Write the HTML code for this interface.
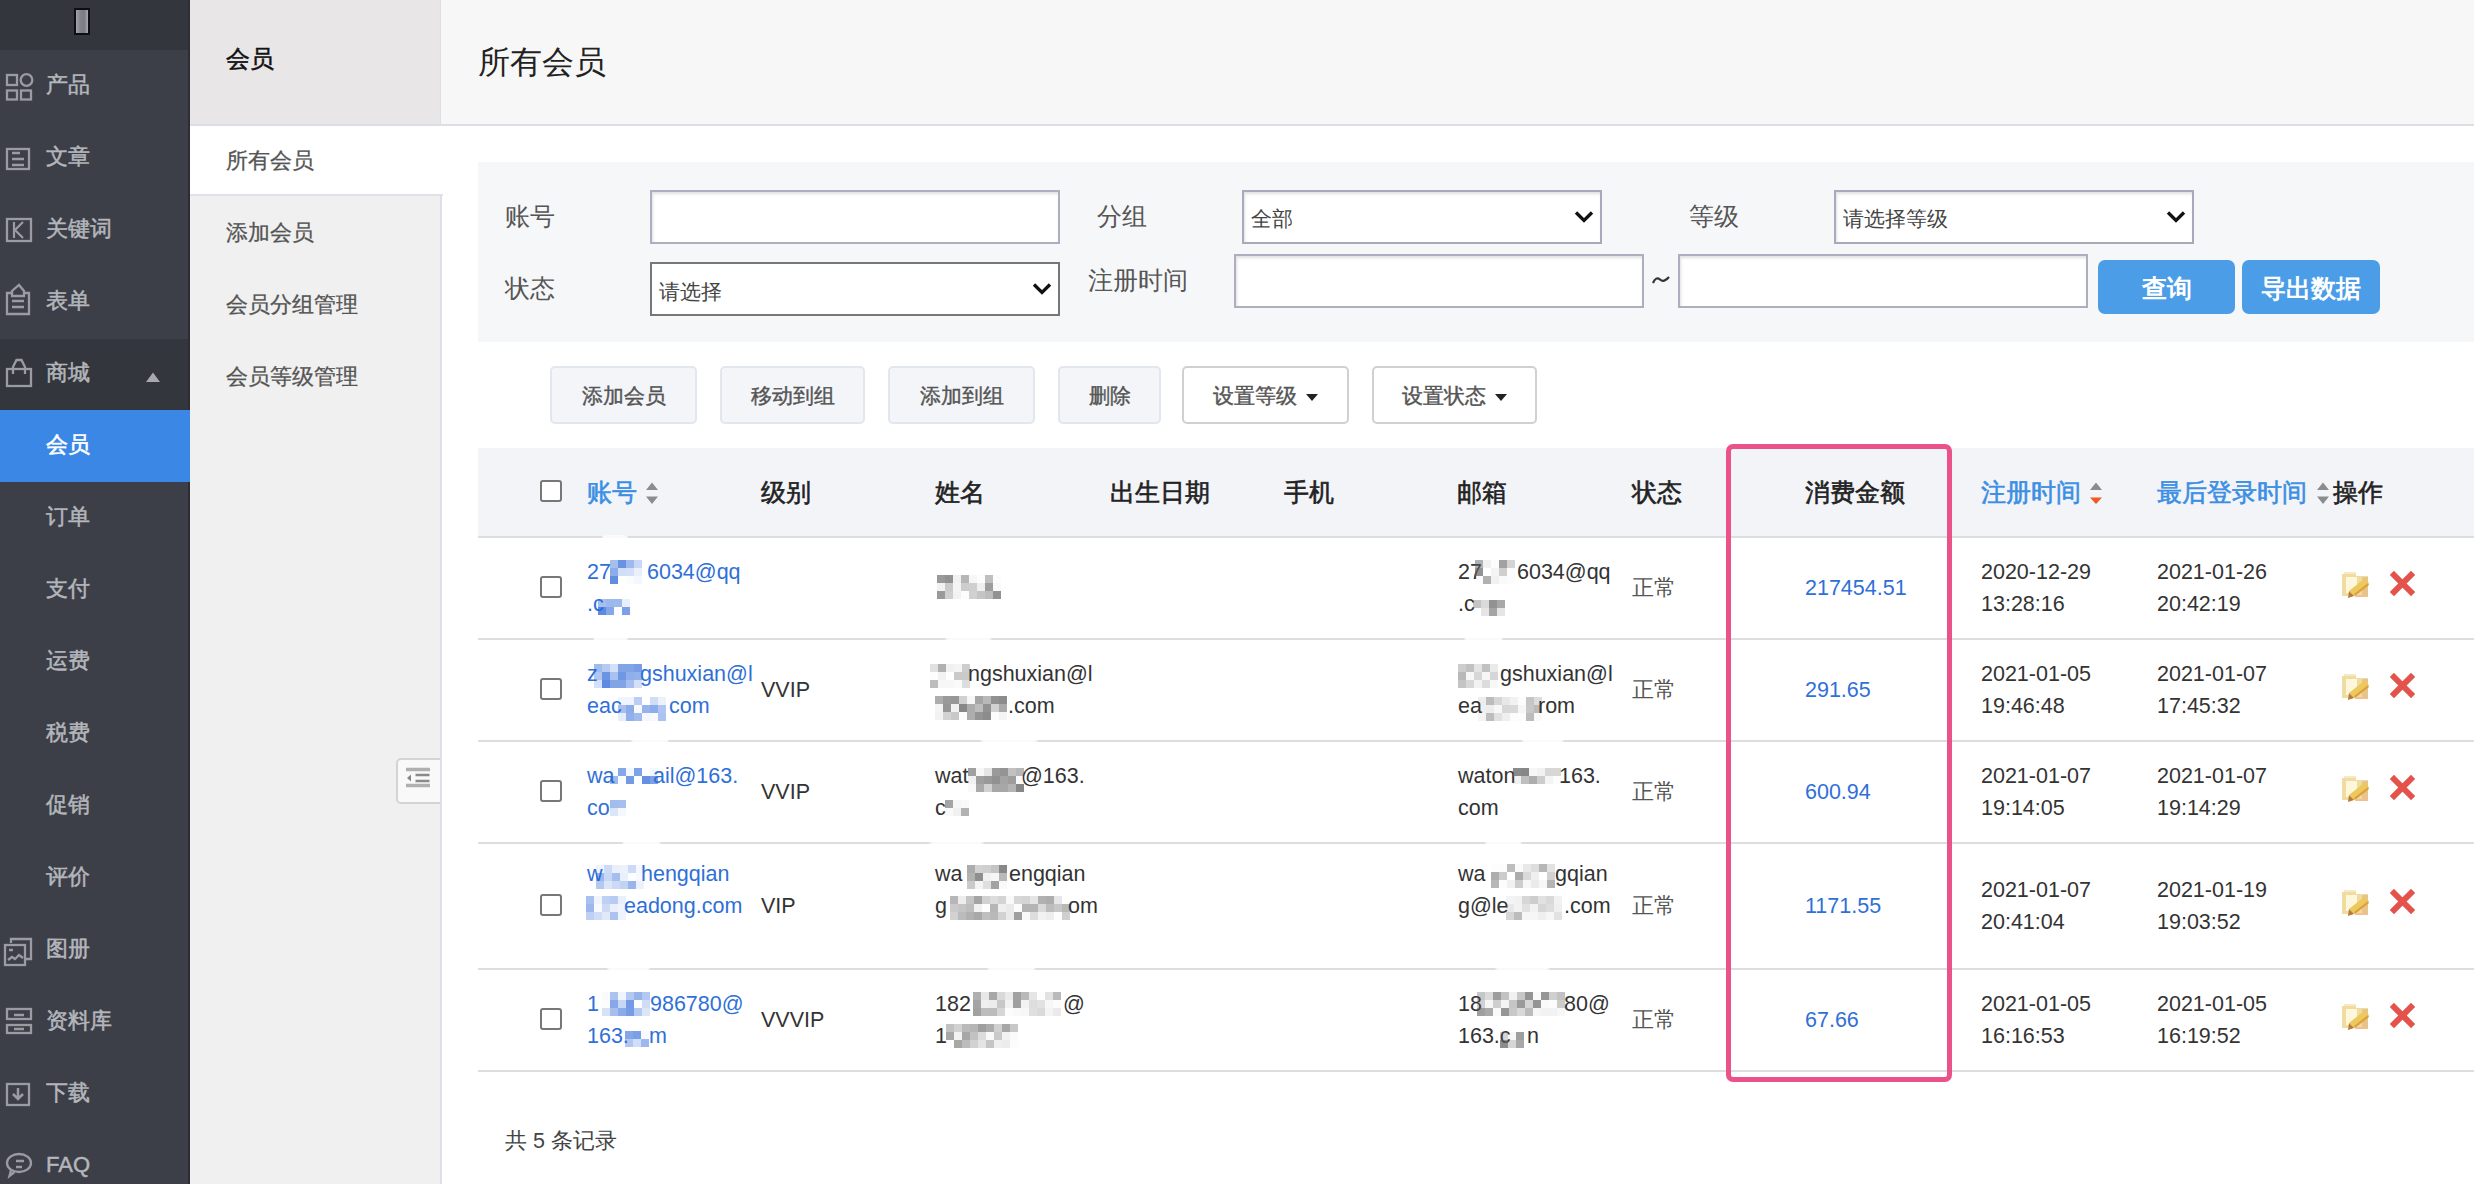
<!DOCTYPE html>
<html><head><meta charset="utf-8">
<style>
*{margin:0;padding:0;box-sizing:border-box}
html,body{width:2474px;height:1184px;overflow:hidden;background:#fff;font-family:"Liberation Sans",sans-serif;color:#333}
.a{position:absolute}
.t{position:absolute;white-space:nowrap;line-height:1}
#side{left:0;top:0;width:190px;height:1184px;background:#3c3f48}
#side .logo{left:0;top:0;width:190px;height:50px;background:#33363d}
#side .it{left:46px;font-size:21.5px;color:#b4b6bb;-webkit-text-stroke:0.5px #b4b6bb}
#side .ic{left:6px;width:28px;height:28px}
#sub{left:190px;top:0;width:252px;height:1184px;background:#f0f0f0;border-right:2px solid #dde0e6}
#sub .hd{left:0;top:0;width:250px;height:126px;background:#e8e6e7;border-bottom:2px solid #dcdee3}
#sub .it{left:36px;font-size:21.5px;color:#555;-webkit-text-stroke:0.3px #555}
#main-hd{left:441px;top:0;width:2033px;height:126px;background:#f7f7f7;border-bottom:2px solid #dcdee3}
.lbl{font-size:25px;color:#555}
.inp{position:absolute;background:#fff;border:2px solid #aeaec0;box-shadow:inset 1px 2px 3px rgba(0,0,0,.12);height:54px}
.sel{position:absolute;background:#fff;border:2px solid #a9a9bb;height:54px;font-size:21px;color:#444}
.sel span{position:absolute;left:7px;top:16px;line-height:1}
.sel svg{position:absolute;right:6px;top:18px}
.btnb{position:absolute;background:#4a9de6;border-radius:7px;color:#fff;font-size:25px;font-weight:bold;text-align:center;height:54px;line-height:57px}
.btn{position:absolute;top:366px;height:58px;background:#f3f5f9;border:2px solid #e1e6ef;border-radius:5px;font-size:21px;color:#555;-webkit-text-stroke:0.4px #555;text-align:center;line-height:56px}
.btn.w{background:#fff;border-color:#cfd0d4}
.th{position:absolute;top:480px;font-size:25px;color:#222;-webkit-text-stroke:0.6px currentColor;line-height:1;white-space:nowrap}
.th.b{color:#3b8fe3}
.cb{position:absolute;width:22px;height:22px;border:2px solid #777;border-radius:3px;background:#fff}
.cell{position:absolute;font-size:21.5px;line-height:32px;color:#333;white-space:nowrap}
.cell.b{color:#2f6fd8}
.st{position:absolute;font-size:21px;color:#555;line-height:1}
.hl{position:absolute;height:2px;background:#dcdedd;left:478px;width:1996px}
</style></head><body>

<!-- sidebar -->
<div id="side" class="a">
  <div class="a logo"></div>
  <div class="a" style="left:74px;top:8px;width:16px;height:27px;background:#0c0d16;border-radius:1px"></div>
  <div class="a" style="left:76px;top:10px;width:12px;height:23px;background:linear-gradient(90deg,#a3a4a8,#808188 40%,#7a7c82 70%,#a9aaae)"></div>
  <svg class="a" style="left:0;top:0" width="190" height="1184" fill="none" stroke="#9b9ca2" stroke-width="2.3">
    <rect x="7" y="75" width="10" height="10"/><rect x="7" y="90.5" width="10" height="9"/><rect x="21" y="90.5" width="10" height="9"/><circle cx="26.5" cy="80" r="5.8"/>
    <rect x="7" y="149" width="22" height="20"/><path d="M12 153h8M12 159h12M12 165h12"/>
    <rect x="7" y="219" width="24" height="22"/><path d="M14 222v16M23 222l-8 8 8 8" stroke-width="2.2"/>
    <path d="M12 293H7v21h22V293h-5"/><path d="M12 296v-5l7-6 5 6v5z"/><path d="M12 301h12M12 307h12"/>
    <rect x="7" y="369" width="24" height="17"/><path d="M13 374v-7l3.5-7h5l3.5 7v7"/>
    <path d="M11 943v-4h20v20h-6"/><rect x="5" y="945" width="20" height="20"/><path d="M8 960l4-3 3 2 4-4 4 3M9 950h4"/>
    <rect x="7" y="1009" width="24" height="10"/><rect x="7" y="1025" width="24" height="8"/><path d="M14 1015h10M14 1029h10"/>
    <rect x="7" y="1084" width="22" height="21"/><path d="M18 1088v11M13 1094l5 5 5-5" stroke-width="2.5"/>
    <ellipse cx="19" cy="1163" rx="12" ry="9"/><path d="M11 1170l-1.5 6 5-4M16 1161h8M16 1167h6"/>
  </svg>
  <div class="t it" style="top:75px">产品</div>
  <div class="t it" style="top:147px">文章</div>
  <div class="t it" style="top:219px">关键词</div>
  <div class="t it" style="top:291px">表单</div>
  <div class="a" style="left:0;top:339px;width:190px;height:71px;background:#33363d"></div>
  <svg class="a" style="left:0;top:0" width="190" height="420" fill="none" stroke="#9b9ca2" stroke-width="2.3">
    <rect x="7" y="369" width="24" height="17"/><path d="M13 374v-7l3.5-7h5l3.5 7v7"/>
  </svg>
  <div class="t it" style="top:363px">商城</div>
  <svg class="a" style="left:145px;top:371px" width="16" height="12" viewBox="0 0 16 12"><path d="M1 11 L8 1.5 L15 11 Z" fill="#a8a9ad"/></svg>
  <div class="a" style="left:188px;top:0;width:2px;height:1184px;background:#2c2e34"></div>
  <div class="a" style="left:0;top:410px;width:190px;height:72px;background:#3a87e6"></div>
  <div class="t it" style="top:435px;color:#fff;-webkit-text-stroke:0.6px #fff">会员</div>
  <div class="t it" style="top:507px">订单</div>
  <div class="t it" style="top:579px">支付</div>
  <div class="t it" style="top:651px">运费</div>
  <div class="t it" style="top:723px">税费</div>
  <div class="t it" style="top:795px">促销</div>
  <div class="t it" style="top:867px">评价</div>
  <div class="t it" style="top:939px">图册</div>
  <div class="t it" style="top:1011px">资料库</div>
  <div class="t it" style="top:1083px">下载</div>
  <div class="t it" style="top:1154px;font-family:'Liberation Sans',sans-serif;font-size:22px;font-weight:normal">FAQ</div>
</div>

<!-- sub nav -->
<div id="sub" class="a">
  <div class="a hd"></div>
  <div class="t" style="left:36px;top:47px;font-size:24px;-webkit-text-stroke:0.5px #111;color:#111">会员</div>
  <div class="a" style="left:0;top:126px;width:253px;height:70px;background:#fff;border-bottom:2px solid #dfe1e7"></div>
  <div class="t it" style="top:151px">所有会员</div>
  <div class="t it" style="top:223px">添加会员</div>
  <div class="t it" style="top:295px">会员分组管理</div>
  <div class="t it" style="top:367px">会员等级管理</div>
  <div class="a" style="left:206px;top:758px;width:48px;height:46px;background:#f9f9f9;border:2px solid #d4d4d6;border-radius:5px;clip-path:inset(0 4px 0 0)"></div>
  <svg class="a" style="left:206px;top:758px" width="46" height="46" fill="none"><path d="M10 11.5h24M10 27.5h24" stroke="#b0b0b0" stroke-width="3.5"/><path d="M19.5 17h14M19.5 23h14" stroke="#8a8a8a" stroke-width="2.5"/><path d="M15 16.5l-4 3.5 4 3.5z" fill="#888"/></svg>
</div>

<!-- main header -->
<div id="main-hd" class="a"></div>
<div class="t" style="left:478px;top:46px;font-size:32px;color:#222">所有会员</div>

<!-- filter panel -->
<div class="a" style="left:478px;top:162px;width:1996px;height:180px;background:#f6f7f9"></div>
<div class="t lbl" style="left:505px;top:204px">账号</div>
<div class="inp" style="left:650px;top:190px;width:410px"></div>
<div class="t lbl" style="left:1097px;top:204px">分组</div>
<div class="sel" style="left:1242px;top:190px;width:360px;box-shadow:inset 1px 2px 3px rgba(0,0,0,.12)"><span>全部</span><svg width="20" height="14" viewBox="0 0 20 14"><path d="M2 2.5 L10 10.5 L18 2.5" fill="none" stroke="#111" stroke-width="3.3"/></svg></div>
<div class="t lbl" style="left:1689px;top:204px">等级</div>
<div class="sel" style="left:1834px;top:190px;width:360px;box-shadow:inset 1px 2px 3px rgba(0,0,0,.12)"><span>请选择等级</span><svg width="20" height="14" viewBox="0 0 20 14"><path d="M2 2.5 L10 10.5 L18 2.5" fill="none" stroke="#111" stroke-width="3.3"/></svg></div>

<div class="t lbl" style="left:505px;top:276px">状态</div>
<div class="sel" style="left:650px;top:262px;width:410px;border-color:#777"><span style="top:17px">请选择</span><svg width="20" height="14" viewBox="0 0 20 14"><path d="M2 2.5 L10 10.5 L18 2.5" fill="none" stroke="#111" stroke-width="3.3"/></svg></div>
<div class="t lbl" style="left:1088px;top:268px">注册时间</div>
<div class="inp" style="left:1234px;top:254px;width:410px"></div>
<svg class="a" style="left:1650px;top:272px" width="22" height="16"><path d="M3 11 Q6 4 10 7.5 T19 5" fill="none" stroke="#333" stroke-width="2.2"/></svg>
<div class="inp" style="left:1678px;top:254px;width:410px"></div>
<div class="btnb" style="left:2098px;top:260px;width:137px">查询</div>
<div class="btnb" style="left:2242px;top:260px;width:138px">导出数据</div>

<!-- action buttons -->
<div class="btn" style="left:550px;width:147px">添加会员</div>
<div class="btn" style="left:720px;width:145px">移动到组</div>
<div class="btn" style="left:888px;width:147px">添加到组</div>
<div class="btn" style="left:1058px;width:103px">删除</div>
<div class="btn w" style="left:1182px;width:167px">设置等级 <span style="display:inline-block;width:0;height:0;border-left:6px solid transparent;border-right:6px solid transparent;border-top:7px solid #222;vertical-align:middle;margin-left:4px"></span></div>
<div class="btn w" style="left:1372px;width:165px">设置状态 <span style="display:inline-block;width:0;height:0;border-left:6px solid transparent;border-right:6px solid transparent;border-top:7px solid #222;vertical-align:middle;margin-left:4px"></span></div>

<!-- table header -->
<div class="a" style="left:478px;top:448px;width:1996px;height:89px;background:#f3f4f8"></div>
<div class="hl" style="top:536px"></div>
<div class="cb" style="left:540px;top:480px"></div>
<div class="th b" style="left:587px">账号</div>
<svg class="a" style="left:646px;top:482px" width="12" height="22" viewBox="0 0 12 22"><path d="M0 8 L6 0.5 L12 8Z M0 14.5 L6 22 L12 14.5Z" fill="#8c8c8c"/></svg>
<div class="th" style="left:761px">级别</div>
<div class="th" style="left:935px">姓名</div>
<div class="th" style="left:1110px">出生日期</div>
<div class="th" style="left:1284px">手机</div>
<div class="th" style="left:1457px">邮箱</div>
<div class="th" style="left:1632px">状态</div>
<div class="th" style="left:1805px">消费金额</div>
<div class="th b" style="left:1981px">注册时间</div>
<svg class="a" style="left:2090px;top:482px" width="12" height="22" viewBox="0 0 12 22"><path d="M0 8 L6 0.5 L12 8Z" fill="#8c8c8c"/><path d="M0 15.5 L6 22 L12 15.5Z" fill="#ee5a1e"/></svg>
<div class="th b" style="left:2157px">最后登录时间</div>
<svg class="a" style="left:2317px;top:482px" width="12" height="22" viewBox="0 0 12 22"><path d="M0 8 L6 0.5 L12 8Z M0 14.5 L6 22 L12 14.5Z" fill="#8c8c8c"/></svg>
<div class="th" style="left:2333px">操作</div>

<!-- row lines -->
<div class="hl" style="top:638px"></div>
<div class="hl" style="top:740px"></div>
<div class="hl" style="top:842px"></div>
<div class="hl" style="top:968px"></div>
<div class="hl" style="top:1070px"></div>
<div class="cb" style="left:540px;top:576px"></div>
<div class="cell" style="left:1632px;top:572px;color:#555;font-size:22px">正常</div>
<svg class="a" style="left:2342px;top:572px" width="30" height="27" viewBox="0 0 30 27"><path d="M0 2h14v2h12v20H0z" fill="#f0dba0"/><path d="M2 0h12v2H2z" fill="#f6e9c4"/><path d="M4 5h11v16H4z" fill="#fdf7dc"/><path d="M20 5h6v19h-6z" fill="#e6c48a"/><path d="M7 19L22 7l5 4-15 13z" fill="#ecc95a"/><path d="M12 22l14-11 1 2-14 11z" fill="#dca040"/><path d="M7 19l5 5-6 2z" fill="#b87a3c"/><path d="M13 23h13v2H13z" fill="#f2c090"/></svg>
<svg class="a" style="left:2390px;top:571px" width="25" height="25" viewBox="0 0 25 25"><path d="M4 4L21 21M21 4L4 21" stroke="#e4534b" stroke-width="6" stroke-linecap="square"/></svg>
<div class="cb" style="left:540px;top:678px"></div>
<div class="cell" style="left:1632px;top:674px;color:#555;font-size:22px">正常</div>
<svg class="a" style="left:2342px;top:674px" width="30" height="27" viewBox="0 0 30 27"><path d="M0 2h14v2h12v20H0z" fill="#f0dba0"/><path d="M2 0h12v2H2z" fill="#f6e9c4"/><path d="M4 5h11v16H4z" fill="#fdf7dc"/><path d="M20 5h6v19h-6z" fill="#e6c48a"/><path d="M7 19L22 7l5 4-15 13z" fill="#ecc95a"/><path d="M12 22l14-11 1 2-14 11z" fill="#dca040"/><path d="M7 19l5 5-6 2z" fill="#b87a3c"/><path d="M13 23h13v2H13z" fill="#f2c090"/></svg>
<svg class="a" style="left:2390px;top:673px" width="25" height="25" viewBox="0 0 25 25"><path d="M4 4L21 21M21 4L4 21" stroke="#e4534b" stroke-width="6" stroke-linecap="square"/></svg>
<div class="cb" style="left:540px;top:780px"></div>
<div class="cell" style="left:1632px;top:776px;color:#555;font-size:22px">正常</div>
<svg class="a" style="left:2342px;top:776px" width="30" height="27" viewBox="0 0 30 27"><path d="M0 2h14v2h12v20H0z" fill="#f0dba0"/><path d="M2 0h12v2H2z" fill="#f6e9c4"/><path d="M4 5h11v16H4z" fill="#fdf7dc"/><path d="M20 5h6v19h-6z" fill="#e6c48a"/><path d="M7 19L22 7l5 4-15 13z" fill="#ecc95a"/><path d="M12 22l14-11 1 2-14 11z" fill="#dca040"/><path d="M7 19l5 5-6 2z" fill="#b87a3c"/><path d="M13 23h13v2H13z" fill="#f2c090"/></svg>
<svg class="a" style="left:2390px;top:775px" width="25" height="25" viewBox="0 0 25 25"><path d="M4 4L21 21M21 4L4 21" stroke="#e4534b" stroke-width="6" stroke-linecap="square"/></svg>
<div class="cb" style="left:540px;top:894px"></div>
<div class="cell" style="left:1632px;top:890px;color:#555;font-size:22px">正常</div>
<svg class="a" style="left:2342px;top:890px" width="30" height="27" viewBox="0 0 30 27"><path d="M0 2h14v2h12v20H0z" fill="#f0dba0"/><path d="M2 0h12v2H2z" fill="#f6e9c4"/><path d="M4 5h11v16H4z" fill="#fdf7dc"/><path d="M20 5h6v19h-6z" fill="#e6c48a"/><path d="M7 19L22 7l5 4-15 13z" fill="#ecc95a"/><path d="M12 22l14-11 1 2-14 11z" fill="#dca040"/><path d="M7 19l5 5-6 2z" fill="#b87a3c"/><path d="M13 23h13v2H13z" fill="#f2c090"/></svg>
<svg class="a" style="left:2390px;top:889px" width="25" height="25" viewBox="0 0 25 25"><path d="M4 4L21 21M21 4L4 21" stroke="#e4534b" stroke-width="6" stroke-linecap="square"/></svg>
<div class="cb" style="left:540px;top:1008px"></div>
<div class="cell" style="left:1632px;top:1004px;color:#555;font-size:22px">正常</div>
<svg class="a" style="left:2342px;top:1004px" width="30" height="27" viewBox="0 0 30 27"><path d="M0 2h14v2h12v20H0z" fill="#f0dba0"/><path d="M2 0h12v2H2z" fill="#f6e9c4"/><path d="M4 5h11v16H4z" fill="#fdf7dc"/><path d="M20 5h6v19h-6z" fill="#e6c48a"/><path d="M7 19L22 7l5 4-15 13z" fill="#ecc95a"/><path d="M12 22l14-11 1 2-14 11z" fill="#dca040"/><path d="M7 19l5 5-6 2z" fill="#b87a3c"/><path d="M13 23h13v2H13z" fill="#f2c090"/></svg>
<svg class="a" style="left:2390px;top:1003px" width="25" height="25" viewBox="0 0 25 25"><path d="M4 4L21 21M21 4L4 21" stroke="#e4534b" stroke-width="6" stroke-linecap="square"/></svg>
<div class="cell b" style="left:1805px;top:572px;">217454.51</div>
<div class="cell" style="left:1981px;top:556px;">2020-12-29<br>13:28:16</div>
<div class="cell" style="left:2157px;top:556px;">2021-01-26<br>20:42:19</div>
<div class="cell b" style="left:1805px;top:674px;">291.65</div>
<div class="cell" style="left:1981px;top:658px;">2021-01-05<br>19:46:48</div>
<div class="cell" style="left:2157px;top:658px;">2021-01-07<br>17:45:32</div>
<div class="cell b" style="left:1805px;top:776px;">600.94</div>
<div class="cell" style="left:1981px;top:760px;">2021-01-07<br>19:14:05</div>
<div class="cell" style="left:2157px;top:760px;">2021-01-07<br>19:14:29</div>
<div class="cell b" style="left:1805px;top:890px;">1171.55</div>
<div class="cell" style="left:1981px;top:874px;">2021-01-07<br>20:41:04</div>
<div class="cell" style="left:2157px;top:874px;">2021-01-19<br>19:03:52</div>
<div class="cell b" style="left:1805px;top:1004px;">67.66</div>
<div class="cell" style="left:1981px;top:988px;">2021-01-05<br>16:16:53</div>
<div class="cell" style="left:2157px;top:988px;">2021-01-05<br>16:19:52</div>
<div class="cell" style="left:761px;top:674px;">VVIP</div>
<div class="cell" style="left:761px;top:776px;">VVIP</div>
<div class="cell" style="left:761px;top:890px;">VIP</div>
<div class="cell" style="left:761px;top:1004px;">VVVIP</div>
<div class="cell b" style="left:587px;top:556px;">27</div>
<svg class="a" style="left:610px;top:560px" width="32" height="24"><rect x="0" y="0" width="8" height="8" fill="rgba(40,100,215,0.42)"/><rect x="8" y="0" width="8" height="8" fill="rgba(40,100,215,0.70)"/><rect x="16" y="0" width="8" height="8" fill="rgba(40,100,215,0.45)"/><rect x="24" y="0" width="8" height="8" fill="rgba(40,100,215,0.26)"/><rect x="0" y="8" width="8" height="8" fill="rgba(40,100,215,0.53)"/><rect x="8" y="8" width="8" height="8" fill="rgba(40,100,215,0.21)"/><rect x="16" y="8" width="8" height="8" fill="rgba(40,100,215,0.20)"/><rect x="24" y="8" width="8" height="8" fill="rgba(40,100,215,0.10)"/><rect x="0" y="16" width="8" height="8" fill="rgba(40,100,215,0.73)"/><rect x="8" y="16" width="8" height="8" fill="rgba(40,100,215,0.00)"/><rect x="16" y="16" width="8" height="8" fill="rgba(40,100,215,0.02)"/><rect x="24" y="16" width="8" height="8" fill="rgba(40,100,215,0.05)"/></svg>
<div class="cell b" style="left:647px;top:556px;">6034@qq</div>
<div class="cell b" style="left:587px;top:588px;">.c</div>
<svg class="a" style="left:598px;top:599px" width="32" height="16"><rect x="0" y="0" width="8" height="8" fill="rgba(40,100,215,0.41)"/><rect x="8" y="0" width="8" height="8" fill="rgba(40,100,215,0.46)"/><rect x="16" y="0" width="8" height="8" fill="rgba(40,100,215,0.45)"/><rect x="24" y="0" width="8" height="8" fill="rgba(40,100,215,0.10)"/><rect x="0" y="8" width="8" height="8" fill="rgba(40,100,215,0.75)"/><rect x="8" y="8" width="8" height="8" fill="rgba(40,100,215,0.57)"/><rect x="16" y="8" width="8" height="8" fill="rgba(40,100,215,0.01)"/><rect x="24" y="8" width="8" height="8" fill="rgba(40,100,215,0.61)"/></svg>
<svg class="a" style="left:937px;top:575px" width="64" height="24"><rect x="0" y="0" width="8" height="8" fill="rgba(95,95,95,0.63)"/><rect x="8" y="0" width="8" height="8" fill="rgba(95,95,95,0.68)"/><rect x="16" y="0" width="8" height="8" fill="rgba(95,95,95,0.09)"/><rect x="24" y="0" width="8" height="8" fill="rgba(95,95,95,0.46)"/><rect x="32" y="0" width="8" height="8" fill="rgba(95,95,95,0.06)"/><rect x="40" y="0" width="8" height="8" fill="rgba(95,95,95,0.01)"/><rect x="48" y="0" width="8" height="8" fill="rgba(95,95,95,0.40)"/><rect x="56" y="0" width="8" height="8" fill="rgba(95,95,95,0.02)"/><rect x="0" y="8" width="8" height="8" fill="rgba(95,95,95,0.08)"/><rect x="8" y="8" width="8" height="8" fill="rgba(95,95,95,0.33)"/><rect x="16" y="8" width="8" height="8" fill="rgba(95,95,95,0.07)"/><rect x="24" y="8" width="8" height="8" fill="rgba(95,95,95,0.31)"/><rect x="32" y="8" width="8" height="8" fill="rgba(95,95,95,0.30)"/><rect x="40" y="8" width="8" height="8" fill="rgba(95,95,95,0.10)"/><rect x="48" y="8" width="8" height="8" fill="rgba(95,95,95,0.61)"/><rect x="56" y="8" width="8" height="8" fill="rgba(95,95,95,0.04)"/><rect x="0" y="16" width="8" height="8" fill="rgba(95,95,95,0.63)"/><rect x="8" y="16" width="8" height="8" fill="rgba(95,95,95,0.30)"/><rect x="16" y="16" width="8" height="8" fill="rgba(95,95,95,0.08)"/><rect x="24" y="16" width="8" height="8" fill="rgba(95,95,95,0.01)"/><rect x="32" y="16" width="8" height="8" fill="rgba(95,95,95,0.29)"/><rect x="40" y="16" width="8" height="8" fill="rgba(95,95,95,0.36)"/><rect x="48" y="16" width="8" height="8" fill="rgba(95,95,95,0.42)"/><rect x="56" y="16" width="8" height="8" fill="rgba(95,95,95,0.68)"/></svg>
<div class="cell" style="left:1458px;top:556px;">27</div>
<svg class="a" style="left:1475px;top:560px" width="40" height="24"><rect x="0" y="0" width="8" height="8" fill="rgba(95,95,95,0.49)"/><rect x="8" y="0" width="8" height="8" fill="rgba(95,95,95,0.09)"/><rect x="16" y="0" width="8" height="8" fill="rgba(95,95,95,0.02)"/><rect x="24" y="0" width="8" height="8" fill="rgba(95,95,95,0.59)"/><rect x="32" y="0" width="8" height="8" fill="rgba(95,95,95,0.27)"/><rect x="0" y="8" width="8" height="8" fill="rgba(95,95,95,0.68)"/><rect x="8" y="8" width="8" height="8" fill="rgba(95,95,95,0.00)"/><rect x="16" y="8" width="8" height="8" fill="rgba(95,95,95,0.07)"/><rect x="24" y="8" width="8" height="8" fill="rgba(95,95,95,0.30)"/><rect x="32" y="8" width="8" height="8" fill="rgba(95,95,95,0.02)"/><rect x="0" y="16" width="8" height="8" fill="rgba(95,95,95,0.02)"/><rect x="8" y="16" width="8" height="8" fill="rgba(95,95,95,0.49)"/><rect x="16" y="16" width="8" height="8" fill="rgba(95,95,95,0.09)"/><rect x="24" y="16" width="8" height="8" fill="rgba(95,95,95,0.03)"/><rect x="32" y="16" width="8" height="8" fill="rgba(95,95,95,0.02)"/></svg>
<div class="cell" style="left:1517px;top:556px;">6034@qq</div>
<div class="cell" style="left:1458px;top:588px;">.c</div>
<svg class="a" style="left:1473px;top:600px" width="32" height="16"><rect x="0" y="0" width="8" height="8" fill="rgba(95,95,95,0.37)"/><rect x="8" y="0" width="8" height="8" fill="rgba(95,95,95,0.23)"/><rect x="16" y="0" width="8" height="8" fill="rgba(95,95,95,0.68)"/><rect x="24" y="0" width="8" height="8" fill="rgba(95,95,95,0.54)"/><rect x="0" y="8" width="8" height="8" fill="rgba(95,95,95,0.00)"/><rect x="8" y="8" width="8" height="8" fill="rgba(95,95,95,0.16)"/><rect x="16" y="8" width="8" height="8" fill="rgba(95,95,95,0.57)"/><rect x="24" y="8" width="8" height="8" fill="rgba(95,95,95,0.16)"/></svg>
<div class="cell b" style="left:587px;top:658px;">z</div>
<svg class="a" style="left:594px;top:664px" width="48" height="24"><rect x="0" y="0" width="8" height="8" fill="rgba(40,100,215,0.44)"/><rect x="8" y="0" width="8" height="8" fill="rgba(40,100,215,0.34)"/><rect x="16" y="0" width="8" height="8" fill="rgba(40,100,215,0.20)"/><rect x="24" y="0" width="8" height="8" fill="rgba(40,100,215,0.59)"/><rect x="32" y="0" width="8" height="8" fill="rgba(40,100,215,0.59)"/><rect x="40" y="0" width="8" height="8" fill="rgba(40,100,215,0.63)"/><rect x="0" y="8" width="8" height="8" fill="rgba(40,100,215,0.36)"/><rect x="8" y="8" width="8" height="8" fill="rgba(40,100,215,0.69)"/><rect x="16" y="8" width="8" height="8" fill="rgba(40,100,215,0.40)"/><rect x="24" y="8" width="8" height="8" fill="rgba(40,100,215,0.67)"/><rect x="32" y="8" width="8" height="8" fill="rgba(40,100,215,0.52)"/><rect x="40" y="8" width="8" height="8" fill="rgba(40,100,215,0.50)"/><rect x="0" y="16" width="8" height="8" fill="rgba(40,100,215,0.20)"/><rect x="8" y="16" width="8" height="8" fill="rgba(40,100,215,0.75)"/><rect x="16" y="16" width="8" height="8" fill="rgba(40,100,215,0.59)"/><rect x="24" y="16" width="8" height="8" fill="rgba(40,100,215,0.59)"/><rect x="32" y="16" width="8" height="8" fill="rgba(40,100,215,0.41)"/><rect x="40" y="16" width="8" height="8" fill="rgba(40,100,215,0.20)"/></svg>
<div class="cell b" style="left:640px;top:658px;">gshuxian@l</div>
<div class="cell b" style="left:587px;top:690px;">eac</div>
<svg class="a" style="left:618px;top:697px" width="48" height="24"><rect x="0" y="0" width="8" height="8" fill="rgba(40,100,215,0.07)"/><rect x="8" y="0" width="8" height="8" fill="rgba(40,100,215,0.07)"/><rect x="16" y="0" width="8" height="8" fill="rgba(40,100,215,0.32)"/><rect x="24" y="0" width="8" height="8" fill="rgba(40,100,215,0.00)"/><rect x="32" y="0" width="8" height="8" fill="rgba(40,100,215,0.22)"/><rect x="40" y="0" width="8" height="8" fill="rgba(40,100,215,0.09)"/><rect x="0" y="8" width="8" height="8" fill="rgba(40,100,215,0.41)"/><rect x="8" y="8" width="8" height="8" fill="rgba(40,100,215,0.54)"/><rect x="16" y="8" width="8" height="8" fill="rgba(40,100,215,0.04)"/><rect x="24" y="8" width="8" height="8" fill="rgba(40,100,215,0.49)"/><rect x="32" y="8" width="8" height="8" fill="rgba(40,100,215,0.53)"/><rect x="40" y="8" width="8" height="8" fill="rgba(40,100,215,0.37)"/><rect x="0" y="16" width="8" height="8" fill="rgba(40,100,215,0.12)"/><rect x="8" y="16" width="8" height="8" fill="rgba(40,100,215,0.51)"/><rect x="16" y="16" width="8" height="8" fill="rgba(40,100,215,0.44)"/><rect x="24" y="16" width="8" height="8" fill="rgba(40,100,215,0.05)"/><rect x="32" y="16" width="8" height="8" fill="rgba(40,100,215,0.04)"/><rect x="40" y="16" width="8" height="8" fill="rgba(40,100,215,0.39)"/></svg>
<div class="cell b" style="left:669px;top:690px;">com</div>
<svg class="a" style="left:930px;top:664px" width="40" height="24"><rect x="0" y="0" width="8" height="8" fill="rgba(95,95,95,0.19)"/><rect x="8" y="0" width="8" height="8" fill="rgba(95,95,95,0.49)"/><rect x="16" y="0" width="8" height="8" fill="rgba(95,95,95,0.09)"/><rect x="24" y="0" width="8" height="8" fill="rgba(95,95,95,0.07)"/><rect x="32" y="0" width="8" height="8" fill="rgba(95,95,95,0.31)"/><rect x="0" y="8" width="8" height="8" fill="rgba(95,95,95,0.01)"/><rect x="8" y="8" width="8" height="8" fill="rgba(95,95,95,0.08)"/><rect x="16" y="8" width="8" height="8" fill="rgba(95,95,95,0.00)"/><rect x="24" y="8" width="8" height="8" fill="rgba(95,95,95,0.33)"/><rect x="32" y="8" width="8" height="8" fill="rgba(95,95,95,0.33)"/><rect x="0" y="16" width="8" height="8" fill="rgba(95,95,95,0.41)"/><rect x="8" y="16" width="8" height="8" fill="rgba(95,95,95,0.05)"/><rect x="16" y="16" width="8" height="8" fill="rgba(95,95,95,0.05)"/><rect x="24" y="16" width="8" height="8" fill="rgba(95,95,95,0.03)"/><rect x="32" y="16" width="8" height="8" fill="rgba(95,95,95,0.21)"/></svg>
<div class="cell" style="left:968px;top:658px;">ngshuxian@l</div>
<svg class="a" style="left:935px;top:696px" width="72" height="24"><rect x="0" y="0" width="8" height="8" fill="rgba(95,95,95,0.51)"/><rect x="8" y="0" width="8" height="8" fill="rgba(95,95,95,0.63)"/><rect x="16" y="0" width="8" height="8" fill="rgba(95,95,95,0.65)"/><rect x="24" y="0" width="8" height="8" fill="rgba(95,95,95,0.29)"/><rect x="32" y="0" width="8" height="8" fill="rgba(95,95,95,0.05)"/><rect x="40" y="0" width="8" height="8" fill="rgba(95,95,95,0.56)"/><rect x="48" y="0" width="8" height="8" fill="rgba(95,95,95,0.44)"/><rect x="56" y="0" width="8" height="8" fill="rgba(95,95,95,0.69)"/><rect x="64" y="0" width="8" height="8" fill="rgba(95,95,95,0.72)"/><rect x="0" y="8" width="8" height="8" fill="rgba(95,95,95,0.07)"/><rect x="8" y="8" width="8" height="8" fill="rgba(95,95,95,0.66)"/><rect x="16" y="8" width="8" height="8" fill="rgba(95,95,95,0.09)"/><rect x="24" y="8" width="8" height="8" fill="rgba(95,95,95,0.74)"/><rect x="32" y="8" width="8" height="8" fill="rgba(95,95,95,0.52)"/><rect x="40" y="8" width="8" height="8" fill="rgba(95,95,95,0.41)"/><rect x="48" y="8" width="8" height="8" fill="rgba(95,95,95,0.68)"/><rect x="56" y="8" width="8" height="8" fill="rgba(95,95,95,0.29)"/><rect x="64" y="8" width="8" height="8" fill="rgba(95,95,95,0.53)"/><rect x="0" y="16" width="8" height="8" fill="rgba(95,95,95,0.08)"/><rect x="8" y="16" width="8" height="8" fill="rgba(95,95,95,0.28)"/><rect x="16" y="16" width="8" height="8" fill="rgba(95,95,95,0.34)"/><rect x="24" y="16" width="8" height="8" fill="rgba(95,95,95,0.01)"/><rect x="32" y="16" width="8" height="8" fill="rgba(95,95,95,0.51)"/><rect x="40" y="16" width="8" height="8" fill="rgba(95,95,95,0.67)"/><rect x="48" y="16" width="8" height="8" fill="rgba(95,95,95,0.72)"/><rect x="56" y="16" width="8" height="8" fill="rgba(95,95,95,0.02)"/><rect x="64" y="16" width="8" height="8" fill="rgba(95,95,95,0.07)"/></svg>
<div class="cell" style="left:1008px;top:690px;">.com</div>
<svg class="a" style="left:1458px;top:664px" width="40" height="24"><rect x="0" y="0" width="8" height="8" fill="rgba(95,95,95,0.31)"/><rect x="8" y="0" width="8" height="8" fill="rgba(95,95,95,0.39)"/><rect x="16" y="0" width="8" height="8" fill="rgba(95,95,95,0.17)"/><rect x="24" y="0" width="8" height="8" fill="rgba(95,95,95,0.39)"/><rect x="32" y="0" width="8" height="8" fill="rgba(95,95,95,0.13)"/><rect x="0" y="8" width="8" height="8" fill="rgba(95,95,95,0.44)"/><rect x="8" y="8" width="8" height="8" fill="rgba(95,95,95,0.05)"/><rect x="16" y="8" width="8" height="8" fill="rgba(95,95,95,0.25)"/><rect x="24" y="8" width="8" height="8" fill="rgba(95,95,95,0.06)"/><rect x="32" y="8" width="8" height="8" fill="rgba(95,95,95,0.26)"/><rect x="0" y="16" width="8" height="8" fill="rgba(95,95,95,0.37)"/><rect x="8" y="16" width="8" height="8" fill="rgba(95,95,95,0.25)"/><rect x="16" y="16" width="8" height="8" fill="rgba(95,95,95,0.08)"/><rect x="24" y="16" width="8" height="8" fill="rgba(95,95,95,0.22)"/><rect x="32" y="16" width="8" height="8" fill="rgba(95,95,95,0.05)"/></svg>
<div class="cell" style="left:1500px;top:658px;">gshuxian@l</div>
<div class="cell" style="left:1458px;top:690px;">ea</div>
<svg class="a" style="left:1478px;top:697px" width="64" height="24"><rect x="0" y="0" width="8" height="8" fill="rgba(95,95,95,0.11)"/><rect x="8" y="0" width="8" height="8" fill="rgba(95,95,95,0.42)"/><rect x="16" y="0" width="8" height="8" fill="rgba(95,95,95,0.26)"/><rect x="24" y="0" width="8" height="8" fill="rgba(95,95,95,0.14)"/><rect x="32" y="0" width="8" height="8" fill="rgba(95,95,95,0.08)"/><rect x="40" y="0" width="8" height="8" fill="rgba(95,95,95,0.02)"/><rect x="48" y="0" width="8" height="8" fill="rgba(95,95,95,0.36)"/><rect x="56" y="0" width="8" height="8" fill="rgba(95,95,95,0.21)"/><rect x="0" y="8" width="8" height="8" fill="rgba(95,95,95,0.10)"/><rect x="8" y="8" width="8" height="8" fill="rgba(95,95,95,0.11)"/><rect x="16" y="8" width="8" height="8" fill="rgba(95,95,95,0.05)"/><rect x="24" y="8" width="8" height="8" fill="rgba(95,95,95,0.25)"/><rect x="32" y="8" width="8" height="8" fill="rgba(95,95,95,0.24)"/><rect x="40" y="8" width="8" height="8" fill="rgba(95,95,95,0.06)"/><rect x="48" y="8" width="8" height="8" fill="rgba(95,95,95,0.34)"/><rect x="56" y="8" width="8" height="8" fill="rgba(95,95,95,0.43)"/><rect x="0" y="16" width="8" height="8" fill="rgba(95,95,95,0.07)"/><rect x="8" y="16" width="8" height="8" fill="rgba(95,95,95,0.41)"/><rect x="16" y="16" width="8" height="8" fill="rgba(95,95,95,0.19)"/><rect x="24" y="16" width="8" height="8" fill="rgba(95,95,95,0.10)"/><rect x="32" y="16" width="8" height="8" fill="rgba(95,95,95,0.02)"/><rect x="40" y="16" width="8" height="8" fill="rgba(95,95,95,0.01)"/><rect x="48" y="16" width="8" height="8" fill="rgba(95,95,95,0.42)"/><rect x="56" y="16" width="8" height="8" fill="rgba(95,95,95,0.04)"/></svg>
<div class="cell" style="left:1538px;top:690px;">rom</div>
<div class="cell b" style="left:587px;top:760px;">wa</div>
<svg class="a" style="left:610px;top:768px" width="48" height="16"><rect x="0" y="0" width="8" height="8" fill="rgba(40,100,215,0.02)"/><rect x="8" y="0" width="8" height="8" fill="rgba(40,100,215,0.56)"/><rect x="16" y="0" width="8" height="8" fill="rgba(40,100,215,0.05)"/><rect x="24" y="0" width="8" height="8" fill="rgba(40,100,215,0.60)"/><rect x="32" y="0" width="8" height="8" fill="rgba(40,100,215,0.01)"/><rect x="40" y="0" width="8" height="8" fill="rgba(40,100,215,0.06)"/><rect x="0" y="8" width="8" height="8" fill="rgba(40,100,215,0.46)"/><rect x="8" y="8" width="8" height="8" fill="rgba(40,100,215,0.02)"/><rect x="16" y="8" width="8" height="8" fill="rgba(40,100,215,0.65)"/><rect x="24" y="8" width="8" height="8" fill="rgba(40,100,215,0.01)"/><rect x="32" y="8" width="8" height="8" fill="rgba(40,100,215,0.72)"/><rect x="40" y="8" width="8" height="8" fill="rgba(40,100,215,0.61)"/></svg>
<div class="cell b" style="left:653px;top:760px;">ail@163.</div>
<div class="cell b" style="left:587px;top:792px;">co</div>
<svg class="a" style="left:610px;top:800px" width="16" height="16"><rect x="0" y="0" width="8" height="8" fill="rgba(40,100,215,0.43)"/><rect x="8" y="0" width="8" height="8" fill="rgba(40,100,215,0.41)"/><rect x="0" y="8" width="8" height="8" fill="rgba(40,100,215,0.16)"/><rect x="8" y="8" width="8" height="8" fill="rgba(40,100,215,0.05)"/></svg>
<div class="cell" style="left:935px;top:760px;">wat</div>
<svg class="a" style="left:968px;top:768px" width="56" height="24"><rect x="0" y="0" width="8" height="8" fill="rgba(95,95,95,0.59)"/><rect x="8" y="0" width="8" height="8" fill="rgba(95,95,95,0.05)"/><rect x="16" y="0" width="8" height="8" fill="rgba(95,95,95,0.16)"/><rect x="24" y="0" width="8" height="8" fill="rgba(95,95,95,0.63)"/><rect x="32" y="0" width="8" height="8" fill="rgba(95,95,95,0.67)"/><rect x="40" y="0" width="8" height="8" fill="rgba(95,95,95,0.39)"/><rect x="48" y="0" width="8" height="8" fill="rgba(95,95,95,0.45)"/><rect x="0" y="8" width="8" height="8" fill="rgba(95,95,95,0.09)"/><rect x="8" y="8" width="8" height="8" fill="rgba(95,95,95,0.60)"/><rect x="16" y="8" width="8" height="8" fill="rgba(95,95,95,0.64)"/><rect x="24" y="8" width="8" height="8" fill="rgba(95,95,95,0.69)"/><rect x="32" y="8" width="8" height="8" fill="rgba(95,95,95,0.57)"/><rect x="40" y="8" width="8" height="8" fill="rgba(95,95,95,0.61)"/><rect x="48" y="8" width="8" height="8" fill="rgba(95,95,95,0.03)"/><rect x="0" y="16" width="8" height="8" fill="rgba(95,95,95,0.04)"/><rect x="8" y="16" width="8" height="8" fill="rgba(95,95,95,0.53)"/><rect x="16" y="16" width="8" height="8" fill="rgba(95,95,95,0.29)"/><rect x="24" y="16" width="8" height="8" fill="rgba(95,95,95,0.55)"/><rect x="32" y="16" width="8" height="8" fill="rgba(95,95,95,0.55)"/><rect x="40" y="16" width="8" height="8" fill="rgba(95,95,95,0.47)"/><rect x="48" y="16" width="8" height="8" fill="rgba(95,95,95,0.75)"/></svg>
<div class="cell" style="left:1021px;top:760px;">@163.</div>
<div class="cell" style="left:935px;top:792px;">c</div>
<svg class="a" style="left:945px;top:800px" width="24" height="16"><rect x="0" y="0" width="8" height="8" fill="rgba(95,95,95,0.57)"/><rect x="8" y="0" width="8" height="8" fill="rgba(95,95,95,0.06)"/><rect x="16" y="0" width="8" height="8" fill="rgba(95,95,95,0.04)"/><rect x="0" y="8" width="8" height="8" fill="rgba(95,95,95,0.04)"/><rect x="8" y="8" width="8" height="8" fill="rgba(95,95,95,0.09)"/><rect x="16" y="8" width="8" height="8" fill="rgba(95,95,95,0.48)"/></svg>
<div class="cell" style="left:1458px;top:760px;">waton</div>
<svg class="a" style="left:1513px;top:768px" width="48" height="16"><rect x="0" y="0" width="8" height="8" fill="rgba(95,95,95,0.73)"/><rect x="8" y="0" width="8" height="8" fill="rgba(95,95,95,0.75)"/><rect x="16" y="0" width="8" height="8" fill="rgba(95,95,95,0.06)"/><rect x="24" y="0" width="8" height="8" fill="rgba(95,95,95,0.09)"/><rect x="32" y="0" width="8" height="8" fill="rgba(95,95,95,0.25)"/><rect x="40" y="0" width="8" height="8" fill="rgba(95,95,95,0.25)"/><rect x="0" y="8" width="8" height="8" fill="rgba(95,95,95,0.09)"/><rect x="8" y="8" width="8" height="8" fill="rgba(95,95,95,0.40)"/><rect x="16" y="8" width="8" height="8" fill="rgba(95,95,95,0.51)"/><rect x="24" y="8" width="8" height="8" fill="rgba(95,95,95,0.32)"/><rect x="32" y="8" width="8" height="8" fill="rgba(95,95,95,0.07)"/><rect x="40" y="8" width="8" height="8" fill="rgba(95,95,95,0.02)"/></svg>
<div class="cell" style="left:1559px;top:760px;">163.</div>
<div class="cell" style="left:1458px;top:792px;">com</div>
<div class="cell b" style="left:587px;top:858px;">w</div>
<svg class="a" style="left:596px;top:865px" width="48" height="24"><rect x="0" y="0" width="8" height="8" fill="rgba(40,100,215,0.08)"/><rect x="8" y="0" width="8" height="8" fill="rgba(40,100,215,0.23)"/><rect x="16" y="0" width="8" height="8" fill="rgba(40,100,215,0.10)"/><rect x="24" y="0" width="8" height="8" fill="rgba(40,100,215,0.09)"/><rect x="32" y="0" width="8" height="8" fill="rgba(40,100,215,0.24)"/><rect x="40" y="0" width="8" height="8" fill="rgba(40,100,215,0.05)"/><rect x="0" y="8" width="8" height="8" fill="rgba(40,100,215,0.47)"/><rect x="8" y="8" width="8" height="8" fill="rgba(40,100,215,0.26)"/><rect x="16" y="8" width="8" height="8" fill="rgba(40,100,215,0.42)"/><rect x="24" y="8" width="8" height="8" fill="rgba(40,100,215,0.10)"/><rect x="32" y="8" width="8" height="8" fill="rgba(40,100,215,0.01)"/><rect x="40" y="8" width="8" height="8" fill="rgba(40,100,215,0.04)"/><rect x="0" y="16" width="8" height="8" fill="rgba(40,100,215,0.35)"/><rect x="8" y="16" width="8" height="8" fill="rgba(40,100,215,0.17)"/><rect x="16" y="16" width="8" height="8" fill="rgba(40,100,215,0.24)"/><rect x="24" y="16" width="8" height="8" fill="rgba(40,100,215,0.29)"/><rect x="32" y="16" width="8" height="8" fill="rgba(40,100,215,0.48)"/><rect x="40" y="16" width="8" height="8" fill="rgba(40,100,215,0.09)"/></svg>
<div class="cell b" style="left:641px;top:858px;">hengqian</div>
<svg class="a" style="left:586px;top:896px" width="40" height="24"><rect x="0" y="0" width="8" height="8" fill="rgba(40,100,215,0.40)"/><rect x="8" y="0" width="8" height="8" fill="rgba(40,100,215,0.07)"/><rect x="16" y="0" width="8" height="8" fill="rgba(40,100,215,0.30)"/><rect x="24" y="0" width="8" height="8" fill="rgba(40,100,215,0.33)"/><rect x="32" y="0" width="8" height="8" fill="rgba(40,100,215,0.10)"/><rect x="0" y="8" width="8" height="8" fill="rgba(40,100,215,0.46)"/><rect x="8" y="8" width="8" height="8" fill="rgba(40,100,215,0.03)"/><rect x="16" y="8" width="8" height="8" fill="rgba(40,100,215,0.24)"/><rect x="24" y="8" width="8" height="8" fill="rgba(40,100,215,0.10)"/><rect x="32" y="8" width="8" height="8" fill="rgba(40,100,215,0.07)"/><rect x="0" y="16" width="8" height="8" fill="rgba(40,100,215,0.30)"/><rect x="8" y="16" width="8" height="8" fill="rgba(40,100,215,0.22)"/><rect x="16" y="16" width="8" height="8" fill="rgba(40,100,215,0.14)"/><rect x="24" y="16" width="8" height="8" fill="rgba(40,100,215,0.39)"/><rect x="32" y="16" width="8" height="8" fill="rgba(40,100,215,0.08)"/></svg>
<div class="cell b" style="left:624px;top:890px;">eadong.com</div>
<div class="cell" style="left:935px;top:858px;">wa</div>
<svg class="a" style="left:967px;top:865px" width="40" height="24"><rect x="0" y="0" width="8" height="8" fill="rgba(95,95,95,0.52)"/><rect x="8" y="0" width="8" height="8" fill="rgba(95,95,95,0.28)"/><rect x="16" y="0" width="8" height="8" fill="rgba(95,95,95,0.30)"/><rect x="24" y="0" width="8" height="8" fill="rgba(95,95,95,0.37)"/><rect x="32" y="0" width="8" height="8" fill="rgba(95,95,95,0.74)"/><rect x="0" y="8" width="8" height="8" fill="rgba(95,95,95,0.48)"/><rect x="8" y="8" width="8" height="8" fill="rgba(95,95,95,0.70)"/><rect x="16" y="8" width="8" height="8" fill="rgba(95,95,95,0.09)"/><rect x="24" y="8" width="8" height="8" fill="rgba(95,95,95,0.06)"/><rect x="32" y="8" width="8" height="8" fill="rgba(95,95,95,0.44)"/><rect x="0" y="16" width="8" height="8" fill="rgba(95,95,95,0.33)"/><rect x="8" y="16" width="8" height="8" fill="rgba(95,95,95,0.07)"/><rect x="16" y="16" width="8" height="8" fill="rgba(95,95,95,0.20)"/><rect x="24" y="16" width="8" height="8" fill="rgba(95,95,95,0.58)"/><rect x="32" y="16" width="8" height="8" fill="rgba(95,95,95,0.04)"/></svg>
<div class="cell" style="left:1009px;top:858px;">engqian</div>
<div class="cell" style="left:935px;top:890px;">g</div>
<svg class="a" style="left:950px;top:896px" width="120" height="24"><rect x="0" y="0" width="8" height="8" fill="rgba(95,95,95,0.45)"/><rect x="8" y="0" width="8" height="8" fill="rgba(95,95,95,0.11)"/><rect x="16" y="0" width="8" height="8" fill="rgba(95,95,95,0.36)"/><rect x="24" y="0" width="8" height="8" fill="rgba(95,95,95,0.57)"/><rect x="32" y="0" width="8" height="8" fill="rgba(95,95,95,0.29)"/><rect x="40" y="0" width="8" height="8" fill="rgba(95,95,95,0.22)"/><rect x="48" y="0" width="8" height="8" fill="rgba(95,95,95,0.27)"/><rect x="56" y="0" width="8" height="8" fill="rgba(95,95,95,0.04)"/><rect x="64" y="0" width="8" height="8" fill="rgba(95,95,95,0.25)"/><rect x="72" y="0" width="8" height="8" fill="rgba(95,95,95,0.27)"/><rect x="80" y="0" width="8" height="8" fill="rgba(95,95,95,0.16)"/><rect x="88" y="0" width="8" height="8" fill="rgba(95,95,95,0.49)"/><rect x="96" y="0" width="8" height="8" fill="rgba(95,95,95,0.51)"/><rect x="104" y="0" width="8" height="8" fill="rgba(95,95,95,0.15)"/><rect x="112" y="0" width="8" height="8" fill="rgba(95,95,95,0.00)"/><rect x="0" y="8" width="8" height="8" fill="rgba(95,95,95,0.33)"/><rect x="8" y="8" width="8" height="8" fill="rgba(95,95,95,0.36)"/><rect x="16" y="8" width="8" height="8" fill="rgba(95,95,95,0.41)"/><rect x="24" y="8" width="8" height="8" fill="rgba(95,95,95,0.09)"/><rect x="32" y="8" width="8" height="8" fill="rgba(95,95,95,0.01)"/><rect x="40" y="8" width="8" height="8" fill="rgba(95,95,95,0.46)"/><rect x="48" y="8" width="8" height="8" fill="rgba(95,95,95,0.10)"/><rect x="56" y="8" width="8" height="8" fill="rgba(95,95,95,0.13)"/><rect x="64" y="8" width="8" height="8" fill="rgba(95,95,95,0.02)"/><rect x="72" y="8" width="8" height="8" fill="rgba(95,95,95,0.47)"/><rect x="80" y="8" width="8" height="8" fill="rgba(95,95,95,0.47)"/><rect x="88" y="8" width="8" height="8" fill="rgba(95,95,95,0.24)"/><rect x="96" y="8" width="8" height="8" fill="rgba(95,95,95,0.42)"/><rect x="104" y="8" width="8" height="8" fill="rgba(95,95,95,0.35)"/><rect x="112" y="8" width="8" height="8" fill="rgba(95,95,95,0.44)"/><rect x="0" y="16" width="8" height="8" fill="rgba(95,95,95,0.28)"/><rect x="8" y="16" width="8" height="8" fill="rgba(95,95,95,0.42)"/><rect x="16" y="16" width="8" height="8" fill="rgba(95,95,95,0.49)"/><rect x="24" y="16" width="8" height="8" fill="rgba(95,95,95,0.54)"/><rect x="32" y="16" width="8" height="8" fill="rgba(95,95,95,0.40)"/><rect x="40" y="16" width="8" height="8" fill="rgba(95,95,95,0.44)"/><rect x="48" y="16" width="8" height="8" fill="rgba(95,95,95,0.28)"/><rect x="56" y="16" width="8" height="8" fill="rgba(95,95,95,0.13)"/><rect x="64" y="16" width="8" height="8" fill="rgba(95,95,95,0.60)"/><rect x="72" y="16" width="8" height="8" fill="rgba(95,95,95,0.04)"/><rect x="80" y="16" width="8" height="8" fill="rgba(95,95,95,0.21)"/><rect x="88" y="16" width="8" height="8" fill="rgba(95,95,95,0.08)"/><rect x="96" y="16" width="8" height="8" fill="rgba(95,95,95,0.11)"/><rect x="104" y="16" width="8" height="8" fill="rgba(95,95,95,0.01)"/><rect x="112" y="16" width="8" height="8" fill="rgba(95,95,95,0.30)"/></svg>
<div class="cell" style="left:1068px;top:890px;">om</div>
<div class="cell" style="left:1458px;top:858px;">wa</div>
<svg class="a" style="left:1491px;top:864px" width="64" height="24"><rect x="0" y="0" width="8" height="8" fill="rgba(95,95,95,0.01)"/><rect x="8" y="0" width="8" height="8" fill="rgba(95,95,95,0.02)"/><rect x="16" y="0" width="8" height="8" fill="rgba(95,95,95,0.41)"/><rect x="24" y="0" width="8" height="8" fill="rgba(95,95,95,0.03)"/><rect x="32" y="0" width="8" height="8" fill="rgba(95,95,95,0.14)"/><rect x="40" y="0" width="8" height="8" fill="rgba(95,95,95,0.21)"/><rect x="48" y="0" width="8" height="8" fill="rgba(95,95,95,0.46)"/><rect x="56" y="0" width="8" height="8" fill="rgba(95,95,95,0.18)"/><rect x="0" y="8" width="8" height="8" fill="rgba(95,95,95,0.51)"/><rect x="8" y="8" width="8" height="8" fill="rgba(95,95,95,0.32)"/><rect x="16" y="8" width="8" height="8" fill="rgba(95,95,95,0.00)"/><rect x="24" y="8" width="8" height="8" fill="rgba(95,95,95,0.52)"/><rect x="32" y="8" width="8" height="8" fill="rgba(95,95,95,0.24)"/><rect x="40" y="8" width="8" height="8" fill="rgba(95,95,95,0.10)"/><rect x="48" y="8" width="8" height="8" fill="rgba(95,95,95,0.00)"/><rect x="56" y="8" width="8" height="8" fill="rgba(95,95,95,0.29)"/><rect x="0" y="16" width="8" height="8" fill="rgba(95,95,95,0.45)"/><rect x="8" y="16" width="8" height="8" fill="rgba(95,95,95,0.02)"/><rect x="16" y="16" width="8" height="8" fill="rgba(95,95,95,0.09)"/><rect x="24" y="16" width="8" height="8" fill="rgba(95,95,95,0.31)"/><rect x="32" y="16" width="8" height="8" fill="rgba(95,95,95,0.05)"/><rect x="40" y="16" width="8" height="8" fill="rgba(95,95,95,0.13)"/><rect x="48" y="16" width="8" height="8" fill="rgba(95,95,95,0.05)"/><rect x="56" y="16" width="8" height="8" fill="rgba(95,95,95,0.47)"/></svg>
<div class="cell" style="left:1555px;top:858px;">gqian</div>
<div class="cell" style="left:1458px;top:890px;">g@le</div>
<svg class="a" style="left:1506px;top:896px" width="56" height="24"><rect x="0" y="0" width="8" height="8" fill="rgba(95,95,95,0.07)"/><rect x="8" y="0" width="8" height="8" fill="rgba(95,95,95,0.09)"/><rect x="16" y="0" width="8" height="8" fill="rgba(95,95,95,0.26)"/><rect x="24" y="0" width="8" height="8" fill="rgba(95,95,95,0.31)"/><rect x="32" y="0" width="8" height="8" fill="rgba(95,95,95,0.19)"/><rect x="40" y="0" width="8" height="8" fill="rgba(95,95,95,0.24)"/><rect x="48" y="0" width="8" height="8" fill="rgba(95,95,95,0.09)"/><rect x="0" y="8" width="8" height="8" fill="rgba(95,95,95,0.14)"/><rect x="8" y="8" width="8" height="8" fill="rgba(95,95,95,0.08)"/><rect x="16" y="8" width="8" height="8" fill="rgba(95,95,95,0.19)"/><rect x="24" y="8" width="8" height="8" fill="rgba(95,95,95,0.08)"/><rect x="32" y="8" width="8" height="8" fill="rgba(95,95,95,0.26)"/><rect x="40" y="8" width="8" height="8" fill="rgba(95,95,95,0.21)"/><rect x="48" y="8" width="8" height="8" fill="rgba(95,95,95,0.10)"/><rect x="0" y="16" width="8" height="8" fill="rgba(95,95,95,0.26)"/><rect x="8" y="16" width="8" height="8" fill="rgba(95,95,95,0.42)"/><rect x="16" y="16" width="8" height="8" fill="rgba(95,95,95,0.06)"/><rect x="24" y="16" width="8" height="8" fill="rgba(95,95,95,0.06)"/><rect x="32" y="16" width="8" height="8" fill="rgba(95,95,95,0.10)"/><rect x="40" y="16" width="8" height="8" fill="rgba(95,95,95,0.06)"/><rect x="48" y="16" width="8" height="8" fill="rgba(95,95,95,0.18)"/></svg>
<div class="cell" style="left:1564px;top:890px;">.com</div>
<div class="cell b" style="left:587px;top:988px;">1</div>
<svg class="a" style="left:602px;top:992px" width="48" height="24"><rect x="0" y="0" width="8" height="8" fill="rgba(40,100,215,0.03)"/><rect x="8" y="0" width="8" height="8" fill="rgba(40,100,215,0.39)"/><rect x="16" y="0" width="8" height="8" fill="rgba(40,100,215,0.07)"/><rect x="24" y="0" width="8" height="8" fill="rgba(40,100,215,0.35)"/><rect x="32" y="0" width="8" height="8" fill="rgba(40,100,215,0.49)"/><rect x="40" y="0" width="8" height="8" fill="rgba(40,100,215,0.35)"/><rect x="0" y="8" width="8" height="8" fill="rgba(40,100,215,0.01)"/><rect x="8" y="8" width="8" height="8" fill="rgba(40,100,215,0.56)"/><rect x="16" y="8" width="8" height="8" fill="rgba(40,100,215,0.26)"/><rect x="24" y="8" width="8" height="8" fill="rgba(40,100,215,0.65)"/><rect x="32" y="8" width="8" height="8" fill="rgba(40,100,215,0.02)"/><rect x="40" y="8" width="8" height="8" fill="rgba(40,100,215,0.22)"/><rect x="0" y="16" width="8" height="8" fill="rgba(40,100,215,0.19)"/><rect x="8" y="16" width="8" height="8" fill="rgba(40,100,215,0.41)"/><rect x="16" y="16" width="8" height="8" fill="rgba(40,100,215,0.54)"/><rect x="24" y="16" width="8" height="8" fill="rgba(40,100,215,0.64)"/><rect x="32" y="16" width="8" height="8" fill="rgba(40,100,215,0.35)"/><rect x="40" y="16" width="8" height="8" fill="rgba(40,100,215,0.16)"/></svg>
<div class="cell b" style="left:650px;top:988px;">986780@</div>
<div class="cell b" style="left:587px;top:1020px;">163.</div>
<svg class="a" style="left:625px;top:1031px" width="24" height="16"><rect x="0" y="0" width="8" height="8" fill="rgba(40,100,215,0.57)"/><rect x="8" y="0" width="8" height="8" fill="rgba(40,100,215,0.62)"/><rect x="16" y="0" width="8" height="8" fill="rgba(40,100,215,0.03)"/><rect x="0" y="8" width="8" height="8" fill="rgba(40,100,215,0.36)"/><rect x="8" y="8" width="8" height="8" fill="rgba(40,100,215,0.21)"/><rect x="16" y="8" width="8" height="8" fill="rgba(40,100,215,0.46)"/></svg>
<div class="cell b" style="left:649px;top:1020px;">m</div>
<div class="cell" style="left:935px;top:988px;">182</div>
<svg class="a" style="left:973px;top:992px" width="88" height="24"><rect x="0" y="0" width="8" height="8" fill="rgba(95,95,95,0.50)"/><rect x="8" y="0" width="8" height="8" fill="rgba(95,95,95,0.14)"/><rect x="16" y="0" width="8" height="8" fill="rgba(95,95,95,0.55)"/><rect x="24" y="0" width="8" height="8" fill="rgba(95,95,95,0.24)"/><rect x="32" y="0" width="8" height="8" fill="rgba(95,95,95,0.13)"/><rect x="40" y="0" width="8" height="8" fill="rgba(95,95,95,0.59)"/><rect x="48" y="0" width="8" height="8" fill="rgba(95,95,95,0.44)"/><rect x="56" y="0" width="8" height="8" fill="rgba(95,95,95,0.16)"/><rect x="64" y="0" width="8" height="8" fill="rgba(95,95,95,0.01)"/><rect x="72" y="0" width="8" height="8" fill="rgba(95,95,95,0.18)"/><rect x="80" y="0" width="8" height="8" fill="rgba(95,95,95,0.43)"/><rect x="0" y="8" width="8" height="8" fill="rgba(95,95,95,0.56)"/><rect x="8" y="8" width="8" height="8" fill="rgba(95,95,95,0.10)"/><rect x="16" y="8" width="8" height="8" fill="rgba(95,95,95,0.12)"/><rect x="24" y="8" width="8" height="8" fill="rgba(95,95,95,0.35)"/><rect x="32" y="8" width="8" height="8" fill="rgba(95,95,95,0.09)"/><rect x="40" y="8" width="8" height="8" fill="rgba(95,95,95,0.60)"/><rect x="48" y="8" width="8" height="8" fill="rgba(95,95,95,0.08)"/><rect x="56" y="8" width="8" height="8" fill="rgba(95,95,95,0.21)"/><rect x="64" y="8" width="8" height="8" fill="rgba(95,95,95,0.18)"/><rect x="72" y="8" width="8" height="8" fill="rgba(95,95,95,0.05)"/><rect x="80" y="8" width="8" height="8" fill="rgba(95,95,95,0.02)"/><rect x="0" y="16" width="8" height="8" fill="rgba(95,95,95,0.59)"/><rect x="8" y="16" width="8" height="8" fill="rgba(95,95,95,0.41)"/><rect x="16" y="16" width="8" height="8" fill="rgba(95,95,95,0.42)"/><rect x="24" y="16" width="8" height="8" fill="rgba(95,95,95,0.26)"/><rect x="32" y="16" width="8" height="8" fill="rgba(95,95,95,0.02)"/><rect x="40" y="16" width="8" height="8" fill="rgba(95,95,95,0.04)"/><rect x="48" y="16" width="8" height="8" fill="rgba(95,95,95,0.05)"/><rect x="56" y="16" width="8" height="8" fill="rgba(95,95,95,0.20)"/><rect x="64" y="16" width="8" height="8" fill="rgba(95,95,95,0.23)"/><rect x="72" y="16" width="8" height="8" fill="rgba(95,95,95,0.07)"/><rect x="80" y="16" width="8" height="8" fill="rgba(95,95,95,0.13)"/></svg>
<div class="cell" style="left:1063px;top:988px;">@</div>
<div class="cell" style="left:935px;top:1020px;">1</div>
<svg class="a" style="left:946px;top:1024px" width="72" height="24"><rect x="0" y="0" width="8" height="8" fill="rgba(95,95,95,0.38)"/><rect x="8" y="0" width="8" height="8" fill="rgba(95,95,95,0.28)"/><rect x="16" y="0" width="8" height="8" fill="rgba(95,95,95,0.43)"/><rect x="24" y="0" width="8" height="8" fill="rgba(95,95,95,0.46)"/><rect x="32" y="0" width="8" height="8" fill="rgba(95,95,95,0.60)"/><rect x="40" y="0" width="8" height="8" fill="rgba(95,95,95,0.52)"/><rect x="48" y="0" width="8" height="8" fill="rgba(95,95,95,0.29)"/><rect x="56" y="0" width="8" height="8" fill="rgba(95,95,95,0.55)"/><rect x="64" y="0" width="8" height="8" fill="rgba(95,95,95,0.34)"/><rect x="0" y="8" width="8" height="8" fill="rgba(95,95,95,0.55)"/><rect x="8" y="8" width="8" height="8" fill="rgba(95,95,95,0.08)"/><rect x="16" y="8" width="8" height="8" fill="rgba(95,95,95,0.55)"/><rect x="24" y="8" width="8" height="8" fill="rgba(95,95,95,0.38)"/><rect x="32" y="8" width="8" height="8" fill="rgba(95,95,95,0.22)"/><rect x="40" y="8" width="8" height="8" fill="rgba(95,95,95,0.04)"/><rect x="48" y="8" width="8" height="8" fill="rgba(95,95,95,0.33)"/><rect x="56" y="8" width="8" height="8" fill="rgba(95,95,95,0.08)"/><rect x="64" y="8" width="8" height="8" fill="rgba(95,95,95,0.03)"/><rect x="0" y="16" width="8" height="8" fill="rgba(95,95,95,0.01)"/><rect x="8" y="16" width="8" height="8" fill="rgba(95,95,95,0.55)"/><rect x="16" y="16" width="8" height="8" fill="rgba(95,95,95,0.42)"/><rect x="24" y="16" width="8" height="8" fill="rgba(95,95,95,0.28)"/><rect x="32" y="16" width="8" height="8" fill="rgba(95,95,95,0.17)"/><rect x="40" y="16" width="8" height="8" fill="rgba(95,95,95,0.36)"/><rect x="48" y="16" width="8" height="8" fill="rgba(95,95,95,0.10)"/><rect x="56" y="16" width="8" height="8" fill="rgba(95,95,95,0.12)"/><rect x="64" y="16" width="8" height="8" fill="rgba(95,95,95,0.02)"/></svg>
<div class="cell" style="left:1458px;top:988px;">18</div>
<svg class="a" style="left:1477px;top:992px" width="88" height="24"><rect x="0" y="0" width="8" height="8" fill="rgba(95,95,95,0.35)"/><rect x="8" y="0" width="8" height="8" fill="rgba(95,95,95,0.23)"/><rect x="16" y="0" width="8" height="8" fill="rgba(95,95,95,0.61)"/><rect x="24" y="0" width="8" height="8" fill="rgba(95,95,95,0.38)"/><rect x="32" y="0" width="8" height="8" fill="rgba(95,95,95,0.09)"/><rect x="40" y="0" width="8" height="8" fill="rgba(95,95,95,0.35)"/><rect x="48" y="0" width="8" height="8" fill="rgba(95,95,95,0.67)"/><rect x="56" y="0" width="8" height="8" fill="rgba(95,95,95,0.03)"/><rect x="64" y="0" width="8" height="8" fill="rgba(95,95,95,0.66)"/><rect x="72" y="0" width="8" height="8" fill="rgba(95,95,95,0.30)"/><rect x="80" y="0" width="8" height="8" fill="rgba(95,95,95,0.38)"/><rect x="0" y="8" width="8" height="8" fill="rgba(95,95,95,0.29)"/><rect x="8" y="8" width="8" height="8" fill="rgba(95,95,95,0.06)"/><rect x="16" y="8" width="8" height="8" fill="rgba(95,95,95,0.30)"/><rect x="24" y="8" width="8" height="8" fill="rgba(95,95,95,0.07)"/><rect x="32" y="8" width="8" height="8" fill="rgba(95,95,95,0.36)"/><rect x="40" y="8" width="8" height="8" fill="rgba(95,95,95,0.63)"/><rect x="48" y="8" width="8" height="8" fill="rgba(95,95,95,0.27)"/><rect x="56" y="8" width="8" height="8" fill="rgba(95,95,95,0.67)"/><rect x="64" y="8" width="8" height="8" fill="rgba(95,95,95,0.03)"/><rect x="72" y="8" width="8" height="8" fill="rgba(95,95,95,0.02)"/><rect x="80" y="8" width="8" height="8" fill="rgba(95,95,95,0.32)"/><rect x="0" y="16" width="8" height="8" fill="rgba(95,95,95,0.60)"/><rect x="8" y="16" width="8" height="8" fill="rgba(95,95,95,0.53)"/><rect x="16" y="16" width="8" height="8" fill="rgba(95,95,95,0.03)"/><rect x="24" y="16" width="8" height="8" fill="rgba(95,95,95,0.66)"/><rect x="32" y="16" width="8" height="8" fill="rgba(95,95,95,0.34)"/><rect x="40" y="16" width="8" height="8" fill="rgba(95,95,95,0.24)"/><rect x="48" y="16" width="8" height="8" fill="rgba(95,95,95,0.42)"/><rect x="56" y="16" width="8" height="8" fill="rgba(95,95,95,0.06)"/><rect x="64" y="16" width="8" height="8" fill="rgba(95,95,95,0.08)"/><rect x="72" y="16" width="8" height="8" fill="rgba(95,95,95,0.08)"/><rect x="80" y="16" width="8" height="8" fill="rgba(95,95,95,0.05)"/></svg>
<div class="cell" style="left:1564px;top:988px;">80@</div>
<div class="cell" style="left:1458px;top:1020px;">163.c</div>
<svg class="a" style="left:1500px;top:1032px" width="24" height="16"><rect x="0" y="0" width="8" height="8" fill="rgba(95,95,95,0.26)"/><rect x="8" y="0" width="8" height="8" fill="rgba(95,95,95,0.05)"/><rect x="16" y="0" width="8" height="8" fill="rgba(95,95,95,0.60)"/><rect x="0" y="8" width="8" height="8" fill="rgba(95,95,95,0.71)"/><rect x="8" y="8" width="8" height="8" fill="rgba(95,95,95,0.26)"/><rect x="16" y="8" width="8" height="8" fill="rgba(95,95,95,0.54)"/></svg>
<div class="cell" style="left:1527px;top:1020px;">n</div>
<div class="a" style="left:602px;top:535px;width:26px;height:4px;background:rgba(255,255,255,.85);border-radius:50%"></div>
<div class="a" style="left:593px;top:637px;width:35px;height:4px;background:rgba(255,255,255,.85);border-radius:50%"></div>
<div class="a" style="left:945px;top:637px;width:47px;height:4px;background:rgba(255,255,255,.85);border-radius:50%"></div>
<div class="a" style="left:631px;top:739px;width:38px;height:4px;background:rgba(255,255,255,.85);border-radius:50%"></div>
<div class="a" style="left:980px;top:739px;width:58px;height:4px;background:rgba(255,255,255,.85);border-radius:50%"></div>
<div class="a" style="left:622px;top:841px;width:39px;height:4px;background:rgba(255,255,255,.85);border-radius:50%"></div>
<div class="a" style="left:929px;top:841px;width:55px;height:4px;background:rgba(255,255,255,.85);border-radius:50%"></div>
<div class="a" style="left:607px;top:967px;width:43px;height:4px;background:rgba(255,255,255,.85);border-radius:50%"></div>
<div class="a" style="left:987px;top:967px;width:49px;height:4px;background:rgba(255,255,255,.85);border-radius:50%"></div>
<div class="a" style="left:1464px;top:637px;width:39px;height:4px;background:rgba(255,255,255,.85);border-radius:50%"></div>
<div class="a" style="left:1522px;top:739px;width:42px;height:4px;background:rgba(255,255,255,.85);border-radius:50%"></div>
<div class="a" style="left:1485px;top:841px;width:37px;height:4px;background:rgba(255,255,255,.85);border-radius:50%"></div>
<div class="a" style="left:1495px;top:967px;width:55px;height:4px;background:rgba(255,255,255,.85);border-radius:50%"></div>



<div class="t" style="left:505px;top:1131px;font-size:21.5px;color:#444">共 5 条记录</div>

<!-- highlight -->
<div class="a" style="left:1726px;top:444px;width:226px;height:638px;border:5px solid #ea5289;border-radius:7px"></div>
</body></html>
